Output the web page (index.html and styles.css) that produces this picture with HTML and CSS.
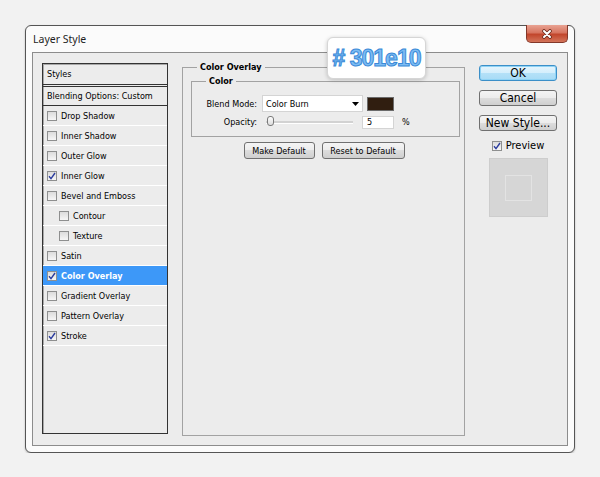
FILE: index.html
```html
<!DOCTYPE html>
<html>
<head lang="en">
    <meta charset="UTF-8">
    <title>Layer Style</title>
    <link rel="stylesheet" href="styles.css">
</head>
<body>
<div class="window">
    <div class="titlebar">
        <span class="title">Layer Style</span>
        <span class="close">
            <svg width="12" height="10" viewBox="0 0 12 10">
                <path d="M3 2 L9 8 M9 2 L3 8" stroke="#6a2a1c" stroke-width="3.6" stroke-linecap="round"/>
                <path d="M3 2 L9 8 M9 2 L3 8" stroke="#fff" stroke-width="2" stroke-linecap="round"/>
            </svg>
        </span>
    </div>
    <div class="panel">
        <ul class="styles">
            <li class="head">Styles</li>
            <li class="blend">Blending Options: Custom</li>
            <li><i class="cb"></i>Drop Shadow</li>
            <li><i class="cb"></i>Inner Shadow</li>
            <li><i class="cb"></i>Outer Glow</li>
            <li><i class="cb"><svg width="8" height="8" viewBox="0 0 8 8"><path d="M1 4.2 L3 6.6 L7 1" fill="none" stroke="#2b3c9e" stroke-width="1.4"/></svg></i>Inner Glow</li>
            <li><i class="cb"></i>Bevel and Emboss</li>
            <li class="sub-item"><i class="cb"></i>Contour</li>
            <li class="sub-item"><i class="cb"></i>Texture</li>
            <li><i class="cb"></i>Satin</li>
            <li class="current"><i class="cb"><svg width="8" height="8" viewBox="0 0 8 8"><path d="M1 4.2 L3 6.6 L7 1" fill="none" stroke="#2b3c9e" stroke-width="1.4"/></svg></i>Color Overlay</li>
            <li><i class="cb"></i>Gradient Overlay</li>
            <li><i class="cb"></i>Pattern Overlay</li>
            <li><i class="cb"><svg width="8" height="8" viewBox="0 0 8 8"><path d="M1 4.2 L3 6.6 L7 1" fill="none" stroke="#2b3c9e" stroke-width="1.4"/></svg></i>Stroke</li>
        </ul>

        <fieldset class="group">
            <legend>Color Overlay</legend>
            <fieldset class="subgroup">
                <legend>Color</legend>
                <div class="row">
                    <label>Blend Mode:</label>
                    <div class="select">Color Burn
                        <svg width="7" height="4" viewBox="0 0 7 4"><path d="M0 0 H7 L3.5 4 Z" fill="#000"/></svg>
                    </div>
                    <div class="swatch"></div>
                </div>
                <div class="row row2">
                    <label>Opacity:</label>
                    <div class="slider"><span class="thumb"></span></div>
                    <div class="input">5</div>
                    <span class="pct">%</span>
                </div>
            </fieldset>
            <div class="defaults">
                <button class="btn make">Make Default</button>
                <button class="btn reset">Reset to Default</button>
            </div>
        </fieldset>

        <div class="side">
            <button class="btn big ok">OK</button>
            <button class="btn big">Cancel</button>
            <button class="btn big">New Style...</button>
            <div class="preview"><i class="cb"><svg width="8" height="8" viewBox="0 0 8 8"><path d="M1 4.2 L3 6.6 L7 1" fill="none" stroke="#2b3c9e" stroke-width="1.4"/></svg></i>Preview</div>
            <div class="thumb-box"><div class="thumb-inner"></div></div>
        </div>
    </div>
</div>
<div class="hint"># 301e10</div>
</body>
</html>
```
FILE: styles.css
```css
body{
    margin: 0;
    padding: 25px 0 0 25px;
    background: #f2f2f2;
    font-family: "DejaVu Sans Condensed", "DejaVu Sans", sans-serif;
    font-stretch: condensed;
    font-size: 9px;
    color: #000;
}
.window{
    width: 550px;
    height: 428px;
    box-sizing: border-box;
    border: 1px solid #555;
    border-radius: 6px;
    background: #fbfbfb;
    padding: 0 6px 6px 6px;
    display: flex;
    flex-direction: column;
    box-shadow: 0 1px 2px rgba(0,0,0,.25);
}
.titlebar{
    height: 26px;
    flex: none;
    display: flex;
    align-items: flex-start;
}
.title{
    font-family: "Noto Sans", sans-serif;
    font-stretch: normal;
    font-size: 10.5px;
    line-height: 26px;
    padding-left: 1px;
    color: #1e1e1e;
}
.close{
    margin-left: auto;
    margin-top: -1px;
    width: 42px;
    height: 18px;
    box-sizing: border-box;
    border: 1px solid #83382a;
    border-top: none;
    border-radius: 0 0 5px 5px;
    background: linear-gradient(#e9a393 0, #d77560 45%, #c2462c 55%, #d3745a 100%);
    display: flex;
    align-items: center;
    justify-content: center;
}

.panel{
    flex: 1;
    border: 1px solid #8c8c8c;
    background: #ececec;
    display: flex;
    align-items: flex-start;
    padding: 10px 0 0 9px;
}

/* list on the left */
.styles{
    list-style: none;
    margin: 0;
    padding: 0;
    width: 126px;
    height: 371px;
    box-sizing: border-box;
    border: 1px solid #333;
    box-shadow: inset 1px 1px 0 #a8a8a8;
    flex: none;
}
.styles li{
    height: 19px;
    border-bottom: 1px solid #fff;
    display: flex;
    align-items: center;
    padding-left: 4px;
}
.styles .head{
    height: 20px;
    border-bottom: 3px double #333;
}
.styles .blend{
    height: 18px;
    border-bottom: 1px solid #333;
}
.styles .sub-item{
    padding-left: 16px;
}
.styles .current{
    background: #3d98f8;
    color: #fff;
    font-weight: bold;
}
.cb{
    width: 10px;
    height: 10px;
    box-sizing: border-box;
    border: 1px solid #8e8f8f;
    background: linear-gradient(#dcdcdc, #f6f6f6);
    margin-right: 4px;
    display: inline-flex;
    align-items: center;
    justify-content: center;
    flex: none;
}

/* middle */
.group{
    margin: -1px 0 0 14px;
    width: 283px;
    height: 374px;
    box-sizing: border-box;
    border: 1px solid #a2a2a2;
    padding: 3px 4px 0 8px;
    min-width: 0;
    flex: none;
}
legend{
    font-weight: bold;
    line-height: 11px;
    padding: 0 3px;
    margin-left: 6px;
}
.subgroup{
    margin: 0;
    height: 61px;
    box-sizing: border-box;
    border: 1px solid #a2a2a2;
    padding: 8px 0 0 0;
    min-width: 0;
}
.subgroup legend{
    margin-left: 14px;
}
.row{
    display: flex;
    align-items: center;
    height: 17px;
}
.row label{
    width: 65px;
    text-align: right;
    flex: none;
}
.select{
    margin-left: 5px;
    width: 101px;
    height: 17px;
    box-sizing: border-box;
    background: #fff;
    border: 1px solid #d4d4d4;
    padding: 0 3px;
    display: flex;
    align-items: center;
    justify-content: space-between;
}
.swatch{
    margin-left: 4px;
    width: 27px;
    height: 14px;
    box-sizing: border-box;
    border: 1px solid #6b6b6b;
    background: #301e10;
}
.row2{
    margin-top: 3px;
    height: 14px;
}
.slider{
    margin-left: 9px;
    width: 87px;
    height: 2px;
    background: #d2d2d2;
    border-bottom: 1px solid #fff;
    position: relative;
}
.thumb{
    position: absolute;
    left: 1px;
    top: -5px;
    width: 7px;
    height: 10px;
    box-sizing: border-box;
    border: 1px solid #7a7a7a;
    border-radius: 3px;
    background: linear-gradient(#fdfdfd, #dcdcdc);
}
.input{
    margin-left: 9px;
    width: 32px;
    height: 13px;
    box-sizing: border-box;
    background: #fff;
    border: 1px solid #d4d4d4;
    padding-left: 4px;
    line-height: 11px;
}
.pct{
    margin-left: 8px;
}
.defaults{
    margin: 5px 0 0 -3px;
    display: flex;
    justify-content: center;
    gap: 7px;
}
.btn{
    font: inherit;
    color: #000;
    height: 17px;
    padding: 0;
    border: 1px solid #707070;
    border-radius: 3px;
    background: linear-gradient(#f4f4f4 0, #ececec 50%, #dddddd 50%, #cfcfcf 100%);
}
.make{
    width: 71px;
}
.reset{
    width: 83px;
}

/* right column */
.side{
    margin: 2px 0 0 14px;
    width: 78px;
    display: flex;
    flex-direction: column;
    align-items: center;
    flex: none;
}
.btn.big{
    width: 78px;
    height: 16px;
    font-size: 12px;
    line-height: 14px;
    margin-bottom: 9px;
}
.btn.ok{
    border-color: #3c8fc8;
    background: linear-gradient(#e6f5fd 0, #d3eefc 50%, #b4e1f8 50%, #a7dbf6 100%);
    box-shadow: inset 0 0 0 1px #8fd3f5;
}
.preview{
    margin-top: -1px;
    display: flex;
    align-items: center;
    font-size: 11px;
    line-height: 13px;
}
.preview .cb{
    margin-right: 4px;
}
.thumb-box{
    margin-top: 6px;
    width: 59px;
    height: 59px;
    box-sizing: border-box;
    border: 1px solid #cdcdcd;
    background: #d6d6d6;
    display: flex;
    align-items: center;
    justify-content: center;
}
.thumb-inner{
    width: 27px;
    height: 26px;
    box-sizing: border-box;
    border: 1px solid #e3e3e3;
}

/* colour label over the dialog */
.hint{
    position: absolute;
    left: 327px;
    top: 37px;
    width: 99px;
    height: 42px;
    box-sizing: border-box;
    background: #fff;
    border: 1px solid #d6d6d6;
    border-radius: 6px;
    box-shadow: 0 1px 4px rgba(0,0,0,.2);
    display: flex;
    align-items: center;
    justify-content: center;
    font-family: "Liberation Sans", sans-serif;
    font-stretch: normal;
    font-weight: bold;
    font-size: 23px;
    letter-spacing: -1px;
    color: #7dbcf3;
    -webkit-text-stroke: 1px #3a8ad8;
}
```
